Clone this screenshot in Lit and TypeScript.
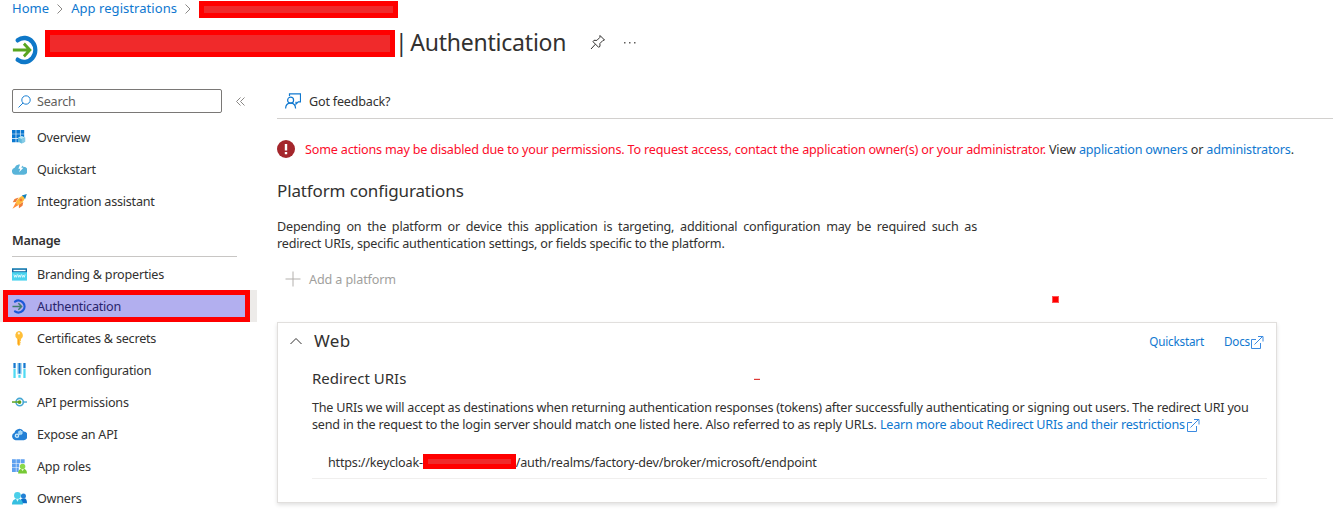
import { LitElement, html, css, svg } from "lit";
import { customElement } from "lit/decorators.js";

const icons: Record<string, unknown> = {
  overview: svg`<g fill="#0b78d0"><path d="M0 0h3.900v3.900H0zM4.600 0h3.900v3.900H4.600zM9.200 0H13v3.900H9.200zM0 4.600h3.900v3.900H0zM4.600 4.600h3.900v3.900H4.600zM9.200 4.600H13v3.900H9.200zM0 9.200h3.900V13H0zM4.600 9.200h2.600V13H4.600z"/></g><path d="M6.500 8l3.800-1.600L14 8v4.600L10.300 14.500l-3.800-1.900z" fill="#5eb9dc"/><path d="M6.500 8l3.800-1.600L14 8l-3.700 1.700z" fill="#b9e5f4"/><path d="M10.300 9.700L14 8v4.600l-3.700 1.900z" fill="#86cbe6"/>`,
  quick: svg`<path d="M3.600 13.500A3.700 3.700 0 0 1 2.800 6.200 5.200 5.200 0 0 1 12 5a4.200 4.200 0 0 1 .5 8.500z" fill="#59b4d9"/><path d="M9 1.500L6.800 7.200h2L7.600 11 12.200 6H9.900L12 1.500z" fill="#fff"/>`,
  rocket: svg`<path d="M7 3.600L2.700 5.200.8 8.800 4 8.500zM12 8.500l-.8 4.100-3.800 2.500-.2-3.800z" fill="#ef7b3a"/><path d="M14.300 1.200C10 1.300 6.200 4.100 3.800 9.700l2.200 2.200c5.500-2.200 8.200-6.500 8.300-10.700z" fill="#ffbb3c"/><path d="M15.800 0l-5.400 1.500c1.600.8 2.800 2.100 3.500 4z" fill="#1382bf"/><path d="M4 9.200L.5 15.800 6.600 12z" fill="#ff8b38"/><circle cx="9.500" cy="6.300" r="1.500" fill="#f47a32"/>`,
  web: svg`<path d="M0 1.500h16v13H0z" fill="#4bd3ee"/><path d="M0 1.500h16v4H0z" fill="#126da6"/><path d="M1.500 3h13v1.500h-13z" fill="#fff"/><path d="M2 8l.9 3 .9-2.300.9 2.300.9-3M6.200 8l.9 3 .9-2.300.9 2.300.9-3M10.400 8l.9 3 .9-2.300.9 2.300.9-3" stroke="#e9fbff" stroke-width=".9" fill="none"/>`,
  key: svg`<path d="M7.300.1a4.600 4.600 0 0 1 2.200 8.400v2l-1 1 1 1-1 1.200.5.800L7.300 16 5.600 14V8.500A4.600 4.600 0 0 1 7.300.1z" fill="#ffbf38"/><path d="M6.500 8.700h.9v5.800h-.9z" fill="#ff9d18"/><circle cx="7.300" cy="2.600" r="1.200" fill="#fff5d9"/>`,
  token: svg`<path d="M1.500 0h2.400v5.500H1.500zM6.800 0h2.400v11.500H6.800zM12.100 0h2.400v5.500h-2.400z" fill="#1579d1"/><path d="M1.500 6.300h2.400V16H1.500zM12.100 6.300h2.400V16h-2.400zM6.800 12.500h2.400v3.200H6.800z" fill="#4fdaf2"/><path d="M5.600 0h.8v12h-.8zM9.600 0h.8v12h-.8z" fill="#93d6f3"/>`,
  api: svg`<path d="M11.500 7.500H16" stroke="#45a7d3" stroke-width="1.500"/><circle cx="8.200" cy="7.500" r="3.900" fill="none" stroke="#45a7d3" stroke-width="1.700"/><path d="M0 7.500h8" stroke="#66a92d" stroke-width="1.700"/><circle cx="8" cy="7.500" r="2" fill="#5aa01f"/>`,
  cloud: svg`<path d="M3.800 14A4.200 4.200 0 0 1 2.600 6 5.400 5.400 0 0 1 12.500 4.700a4.700 4.700 0 0 1 .2 9.300z" fill="#2380d6"/><circle cx="5.300" cy="9.300" r="1.700" fill="none" stroke="#c8e9fc" stroke-width="1.500"/><circle cx="8.900" cy="6" r="2.100" fill="#9bd3f5" stroke="#dff4ff" stroke-dasharray="1 .7"/>`,
  roles: svg`<g fill="#5ea0ef"><path d="M0 .3h4.100v4.100H0zM4.700.3h4.100v4.100H4.700zM9.400.3h4.100v4.100H9.400zM0 5h4.100v4.100H0zM4.700 5h3v4.100h-3zM0 9.700h4.100v4.100H0zM4.700 9.700h2.500v4.100H4.700z"/></g><path d="M6.500 15.500c0-3 1.400-5 4.800-5s4.700 2 4.700 5z" fill="#76c935"/><circle cx="11.300" cy="8" r="2.900" fill="#8bd94a"/><path d="M9.800 10.600h3l-1.500 2.400z" fill="#dff5c9"/>`,
  owners: svg`<path d="M8.500 13c0-3.500 1.400-5.200 4-5.200S16 9.500 16 13z" fill="#0e70c9"/><circle cx="12.200" cy="5.300" r="2.700" fill="#2281d6"/><path d="M0 14.500c0-3.900 1.800-6.300 5.800-6.300s5.900 2.400 5.900 6.300z" fill="#36bfe0"/><circle cx="5.800" cy="4.700" r="3.600" fill="#4acfe9"/><path d="M4.300 8.400h3L5.800 11.500z" fill="#d8f7fc"/>`,
};

const authIcon = (ring: string, arrow: string) => svg`<path d="M3.200 2.800A6.400 6.400 0 1 1 3.200 13.200" fill="none" stroke="${ring}" stroke-width="2.400" stroke-linecap="round"/><path d="M.5 8h9.300M6.800 4.600L10.200 8l-3.400 3.400" fill="none" stroke="${arrow}" stroke-width="1.600"/>`;
icons.auth = authIcon("#1b59d8", "#3f7d6d");

const external = html`<svg class="ext" width="14" height="13" viewBox="0 0 14 13" fill="none" stroke="#3b8ae0"><path d="M6 3.500H1.500v9h9V7M4.500 8.500l8-8M8 .5h5v5"/></svg>`;

const general = [["overview", "Overview"], ["quick", "Quickstart"], ["rocket", "Integration assistant"]];
const manage = [["web", "Branding & properties"], ["auth", "Authentication"], ["key", "Certificates & secrets"], ["token", "Token configuration"], ["api", "API permissions"], ["cloud", "Expose an API"], ["roles", "App roles"], ["owners", "Owners"]];

@customElement("app-root")
export class AppRoot extends LitElement {
  static styles = css`
    :host { display: block; position: relative; height: 514px; overflow: hidden; background: #fff; color: #323130; font: 12.6px/17px "Noto Sans", sans-serif; letter-spacing: -0.2px; }
    * { box-sizing: border-box; }
    svg { display: block; flex: none; }
    a { color: #0f78d0; text-decoration: none; }
    .crumbs { display: flex; align-items: center; height: 18px; padding: 0 0 1px 12px; font-size: 13px; letter-spacing: 0.05px; }
    .sep { margin: 0 8px; }
    .redact { flex: none; background: #f02a2b; border: 5px solid #f00; }
    .r1 { width: 199px; height: 17px; margin: 2px 0 0 -0.5px; }
    .title { display: flex; align-items: center; height: 50px; padding: 0 0 2px 12px; }
    .logo { margin: 16px 5px 0 0; }
    .r2 { width: 350px; height: 27px; margin-top: 3px; }
    h1 { margin: 0; font: 400 23px/32px "Noto Sans", sans-serif; letter-spacing: -0.22px; word-spacing: -3px; white-space: pre; }
    .pin { margin-left: 24px; }
    .dots { margin-left: 17px; }
    .body { display: flex; height: 446px; }
    aside { width: 277px; flex: none; padding-top: 21px; }
    .find { display: flex; align-items: center; padding-left: 12px; }
    .search { width: 210px; height: 24px; border: 1px solid #7a7876; border-radius: 2px; display: flex; align-items: center; gap: 6px; padding-left: 5px; color: #605e5c; }
    .fold { margin-left: 14px; }
    nav { width: 257px; }
    .general { margin-top: 8px; }
    .item { display: flex; align-items: center; height: 32px; padding-left: 12px; gap: 10px; white-space: nowrap; letter-spacing: -0.22px; }
    .item svg { width: 15px; height: 15px; }
    .item.on { position: relative; background: #edebe9; color: #29246b; }
    .item.on::before { content: ""; box-sizing: border-box; position: absolute; left: 3px; top: 0; width: 247px; height: 32px; border: 5px solid #f00; background: #b2afef; }
    .item.on > * { position: relative; }
    .manage { height: 40px; margin: 0 40px 1px 12px; padding-top: 15px; border-bottom: 1px solid #c8c6c4; font-weight: 600; }
    main { flex: 1; min-width: 0; }
    .tool { display: flex; align-items: center; height: 51px; padding: 15px 0 0 8px; gap: 8px; border-bottom: 1px solid #d2d0ce; }
    .tool span { padding-top: 2px; }
    .warn { display: flex; align-items: center; gap: 10px; height: 20px; margin-top: 20px; white-space: nowrap; }
    .warn span { letter-spacing: -0.18px; }
    .warn b { color: #fc0d2b; font-weight: 400; }
    h2 { margin: 20px 0 0; font: 400 17px/24px "Noto Sans", sans-serif; letter-spacing: -0.13px; }
    .intro { width: 700px; margin: 15px 0 0; text-align: justify; }
    .add { display: flex; align-items: center; gap: 8px; height: 20px; margin-top: 17px; padding-left: 8px; color: #a19f9d; letter-spacing: -0.12px; }
    .card { width: 1000px; height: 181px; margin-top: 33px; padding: 0 9px 0 12px; border: 1px solid #e1dfdd; box-shadow: 0 2px 4px rgba(0,0,0,.12); }
    .head { display: flex; align-items: center; height: 36px; padding-right: 3px; font-size: 11.700px; }
    .head h3 { margin: 0 auto 0 12px; font: 400 17px/24px "Noto Sans", sans-serif; letter-spacing: 0.4px; }
    .head .docs { display: flex; margin-left: 20px; }
    .docs .ext { margin-top: 3px; }
    .sub { display: flex; height: 22px; margin: 8px 0 0 22px; font-size: 15px; line-height: 22px; letter-spacing: 0; }
    .dash { width: 6px; height: 2px; margin: 11px 0 0 348px; border-top: 1px solid #fbd5d5; background: #dd3a36; }
    .desc { margin: 10px 0 0 22px; white-space: nowrap; }
    .desc .l1 { letter-spacing: -0.216px; }
    .desc .ext { display: inline-block; vertical-align: -3px; margin-left: 1px; }
    .uri { display: flex; align-items: center; height: 33px; margin: 13px 0 0 22px; padding-left: 16px; border-bottom: 1px solid #f0efee; }
    .r3 { width: 93px; height: 15px; margin-top: -2px; }
    .dot { position: absolute; left: 1052px; top: 296px; width: 7px; height: 7px; background: #f00; border: 1px solid #ff5555; }
  `;

  item([icon, label]: string[]) {
    return html`<div class="item ${icon === "auth" ? "on" : ""}"><svg viewBox="0 0 16 16">${icons[icon]}</svg><span class="label">${label}</span></div>`;
  }

  render() {
    const sep = html`<svg class="sep" width="6" height="10" viewBox="0 0 6 10" fill="none" stroke="#8a8886"><path d="M.5.5L5 5 .5 9.500"/></svg>`;
    return html`
      <div class="crumbs"><a>Home</a>${sep}<a>App registrations</a>${sep}<div class="redact r1"></div></div>
      <div class="title">
        <svg class="logo" width="28" height="30" viewBox="0 0 16 16" preserveAspectRatio="none">${authIcon("#0f78c8", "#58a51f")}</svg>
        <div class="redact r2"></div><h1>| Authentication</h1>
        <svg class="pin" width="16" height="16" viewBox="0 0 16 16" fill="none" stroke="#323130"><path d="M10 1.500l4.500 4.500-1.600.5-3 3 .1 2.800-1.400 1L3 7.700l1-1.400 2.900.1 3-3zM5.400 10.200L1 15"/></svg>
        <svg class="dots" width="13" height="3" viewBox="0 0 13 3" fill="#605e5c"><path d="M1 1h1.500v1.500H1zM6 1h1.500v1.500H6zM11 1h1.500v1.500H11z"/></svg>
      </div>
      <div class="body">
        <aside>
          <div class="find"><div class="search"><svg width="13" height="13" viewBox="0 0 13 13" fill="none" stroke="#1b80d3"><circle cx="8" cy="5" r="4.200"/><path d="M5 8L.5 12.500"/></svg><span>Search</span></div>
          <svg class="fold" width="10" height="9" viewBox="0 0 10 9" fill="none" stroke="#8a8886"><path d="M4.500.5l-4 4 4 4M8.500.5l-4 4 4 4"/></svg></div>
          <nav class="general">${general.map(this.item)}</nav>
          <div class="manage">Manage</div>
          <nav>${manage.map(this.item)}</nav>
        </aside>
        <main>
          <div class="tool"><svg width="16" height="16" viewBox="0 0 16 16" fill="none" stroke="#1078cf" stroke-width="1.200"><path d="M4.500 3V.8h11v8h-2.200L11 11V8.800M.6 15.500c.1-3.500 2-5.300 5-5.300s4.800 1.800 5 5.300"/><circle cx="5.600" cy="7.200" r="3"/></svg><span>Got feedback?</span></div>
          <div class="warn"><svg width="18" height="18" viewBox="0 0 18 18"><circle cx="9" cy="9" r="9" fill="#a4262c"/><path d="M7.800 4h2.400v6.500H7.800zM7.800 12h2.400v2.200H7.800z" fill="#fff"/></svg><span><b>Some actions may be disabled due to your permissions. To request access, contact the application owner(s) or your administrator.</b> View <a>application owners</a> or <a>administrators</a>.</span></div>
          <h2><span>Platform configurations</span></h2>
          <p class="intro">Depending on the platform or device this application is targeting, additional configuration may be required such as redirect URIs, specific authentication settings, or fields specific to the platform.</p>
          <div class="add"><svg width="16" height="16" viewBox="0 0 16 16" stroke="#b3b0ad"><path d="M8 .5v15M.5 8h15"/></svg><span>Add a platform</span></div>
          <section class="card">
            <div class="head"><svg width="12" height="8" viewBox="0 0 12 8" fill="none" stroke="#323130"><path d="M.5 7L6 1.500 11.500 7"/></svg><h3>Web</h3><a>Quickstart</a><a class="docs">Docs${external}</a></div>
            <div class="sub">Redirect URIs<div class="dash"></div></div>
            <div class="desc"><span class="l1">The URIs we will accept as destinations when returning authentication responses (tokens) after successfully authenticating or signing out users. The redirect URI you</span><br>send in the request to the login server should match one listed here. Also referred to as reply URLs. <a>Learn more about Redirect URIs and their restrictions${external}</a></div>
            <div class="uri"><span>https://keycloak-</span><div class="redact r3"></div><span>/auth/realms/factory-dev/broker/microsoft/endpoint</span></div>
          </section>
        </main>
      </div>
      <div class="dot"></div>`;
  }
}
